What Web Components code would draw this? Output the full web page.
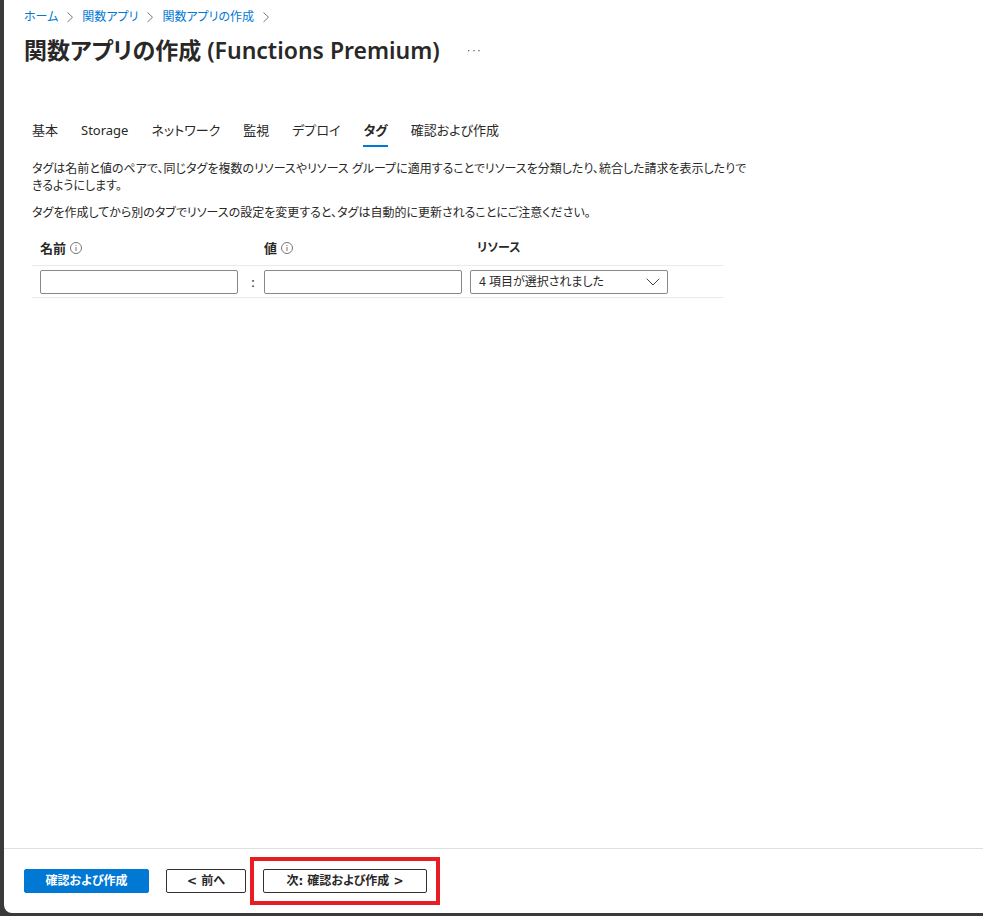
<!DOCTYPE html>
<html lang="ja">
<head>
<meta charset="utf-8">
<meta name="viewport" content="width=device-width, initial-scale=1">
<title>関数アプリの作成</title>
<style>
  :root {
    --frame: #3b3a39;
    --ink: #292827;
    --blue: #0078d4;
    --line: #edebe9;
    --control: #8a8886;
  }
  body {
    margin: 0;
    background: var(--frame);
    color: var(--ink);
    font-family: "Noto Sans", "Noto Sans CJK JP", sans-serif;
    font-size: 13px;
    font-feature-settings: "palt";
  }
</style>
</head>
<body>
<portal-blade>
  <bread-crumbs slot="top">
    <bread-crumb href="#home">ホーム</bread-crumb>
    <bread-crumb href="#apps">関数アプリ</bread-crumb>
    <bread-crumb href="#create">関数アプリの作成</bread-crumb>
  </bread-crumbs>
  <blade-title slot="top">関数アプリの作成 (Functions Premium)</blade-title>
  <tab-bar>
    <tab-item>基本</tab-item>
    <tab-item>Storage</tab-item>
    <tab-item>ネットワーク</tab-item>
    <tab-item>監視</tab-item>
    <tab-item>デプロイ</tab-item>
    <tab-item selected>タグ</tab-item>
    <tab-item>確認および作成</tab-item>
  </tab-bar>
  <info-text>
    <p>タグは名前と値のペアで、同じタグを複数のリソースやリソース グループに適用することでリソースを分類したり、統合した請求を表示したりできるようにします。</p>
    <p>タグを作成してから別のタブでリソースの設定を変更すると、タグは自動的に更新されることにご注意ください。</p>
  </info-text>
  <tag-table></tag-table>
  <action-button slot="footer" primary>確認および作成</action-button>
  <action-button slot="footer">&lt; 前へ</action-button>
  <focus-frame slot="footer"><action-button wide>次: 確認および作成 &gt;</action-button></focus-frame>
</portal-blade>

<script>
const define = (name, html, setup) => customElements.define(name, class extends HTMLElement {
  constructor() {
    super();
    const t = document.createElement('template');
    t.innerHTML = html;
    this.attachShadow({ mode: 'open' }).append(t.content.cloneNode(true));
  }
  connectedCallback() { if (setup) setup(this, this.shadowRoot); }
});

define('portal-blade', `
  <style>
    :host { display: flex; flex-direction: column; box-sizing: border-box; min-height: 100vh; padding: 0 0 3px 4px; }
    .sheet { flex: 1; display: flex; flex-direction: column; background: #fff; border-bottom-left-radius: 8px; }
    header { padding: 6px 20px 0; height: 112px; box-sizing: border-box; }
    main { flex: 1; padding: 0 28px; }
    footer { display: flex; align-items: center; padding: 20px; border-top: 1px solid #e1dfdd; gap: 17px; }
  </style>
  <div class="sheet">
    <header><slot name="top"></slot></header>
    <main><slot></slot></main>
    <footer><slot name="footer"></slot></footer>
  </div>`);

define('bread-crumbs', `
  <style>
    :host { display: block; }
    nav { display: flex; align-items: center; height: 22px; gap: 7px; }
  </style>
  <nav aria-label="階層"><slot></slot></nav>`);

define('bread-crumb', `
  <style>
    :host { display: flex; align-items: center; gap: 7px; font-size: 12px; line-height: 22px; }
    a { color: var(--blue); text-decoration: none; }
    svg { width: 10px; height: 12px; fill: none; stroke: #797775; }
  </style>
  <a><slot></slot></a>
  <svg viewBox="0 0 10 12" aria-hidden="true"><path d="M2.5 1.5 7.5 6.2 2.5 11"/></svg>`,
  (el, root) => { root.querySelector('a').href = el.getAttribute('href'); });

define('blade-title', `
  <style>
    :host { display: flex; align-items: center; gap: 28px; height: 44px; }
    h1 { margin: 0; font-size: 23px; line-height: 32px; font-weight: 600; }
    button { border: 0; padding: 0; background: none; display: flex; }
    svg { width: 12px; height: 12px; fill: #605e5c; }
  </style>
  <h1><slot></slot></h1>
  <button type="button" aria-label="その他">
    <svg viewBox="0 0 12 12"><path d="M0 6h1.3v1.3H0zM5.3 6h1.3v1.3H5.3zM10.3 6h1.3v1.3h-1.3z"/></svg>
  </button>`);

define('tab-bar', `
  <style>
    :host { display: flex; gap: 23px; height: 35px; }
  </style>
  <slot></slot>`, el => el.setAttribute('role', 'tablist'));

define('tab-item', `
  <style>
    :host { display: block; }
    button { font: inherit; font-feature-settings: inherit; color: inherit; font-size: 13px; line-height: 33px; height: 35px; padding: 2px 0 0; border: 0; border-bottom: 2px solid transparent; background: none; white-space: nowrap; display: block; }
    :host([selected]) button { font-weight: 700; border-color: var(--blue); }
  </style>
  <button type="button" role="tab"><slot></slot></button>`,
  (el, root) => root.querySelector('button').setAttribute('aria-selected', el.hasAttribute('selected')));

define('info-text', `
  <style>
    :host { display: block; max-width: 720px; padding-top: 13px; font-size: 12px; line-height: 17px; }
    ::slotted(p) { margin: 0 0 10px; }
  </style>
  <slot></slot>`);

define('info-icon', `
  <style>
    :host { display: inline-flex; }
    svg { width: 12px; height: 12px; fill: none; stroke: #797775; }
  </style>
  <svg viewBox="0 0 12 12" aria-hidden="true"><circle cx="6" cy="6" r="5.5"/><path d="M6 5v4M6 3v1"/></svg>`);

define('select-box', `
  <style>
    :host { display: grid; align-items: center; }
    select, svg { grid-area: 1 / 1; }
    select { appearance: none; box-sizing: border-box; width: 100%; height: 24px; margin: 0; padding: 0 28px 0 8px; border: 1px solid var(--control); border-radius: 2px; background: #fff; color: inherit; font: inherit; font-feature-settings: inherit; font-size: 12px; }
    svg { justify-self: end; margin-right: 8px; width: 14px; height: 8px; fill: none; stroke: #484644; pointer-events: none; }
  </style>
  <select aria-label="リソース"><option>4 項目が選択されました</option></select>
  <svg viewBox="0 0 14 8" aria-hidden="true"><path d="M.7.7 7 7 13.3.7"/></svg>`);

define('tag-table', `
  <style>
    :host { display: block; max-width: 692px; }
    table { width: 100%; table-layout: fixed; border-collapse: collapse; }
    tr { border-bottom: 1px solid var(--line); }
    th { height: 34px; padding: 0; text-align: left; font-size: 13px; line-height: 20px; font-weight: 700; white-space: nowrap; }
    th:last-of-type { font-size: 12px; padding-left: 15px; }
    th div { display: flex; align-items: center; gap: 4px; }
    td { height: 31px; padding: 0; }
    .first { padding-left: 8px; }
    .last { padding-left: 8px; padding-right: 56px; }
    .colon { text-align: center; padding-left: 4px; }
    .gap { width: 26px; }
    .a { width: 206px; }
    .b { width: 198px; }
    input { display: block; box-sizing: border-box; width: 100%; height: 24px; margin: 0; padding: 0 8px; border: 1px solid var(--control); border-radius: 2px; font: inherit; color: inherit; }
  </style>
  <table>
    <colgroup><col class="a"><col class="gap"><col class="b"><col></colgroup>
    <thead><tr>
      <th class="first"><div><span id="name">名前</span><info-icon></info-icon></div></th><td></td>
      <th><div><span id="value">値</span><info-icon></info-icon></div></th>
      <th>リソース</th>
    </tr></thead>
    <tbody><tr>
      <td class="first"><input type="text" aria-labelledby="name"></td>
      <td class="colon">:</td>
      <td><input type="text" aria-labelledby="value"></td>
      <td class="last"><select-box></select-box></td>
    </tr></tbody>
  </table>`);

define('action-button', `
  <style>
    :host { display: block; font-family: "DejaVu Sans", "Noto Sans CJK JP", sans-serif; }
    button { box-sizing: border-box; height: 24px; padding: 0 20px; border: 1px solid #323130; border-radius: 2px; background: #fff; color: inherit; font: inherit; font-feature-settings: inherit; font-size: 12px; line-height: 20px; font-weight: 600; white-space: nowrap; display: block; min-width: 80px; }
    :host([primary]) button { background: var(--blue); border-color: var(--blue); color: #fff; min-width: 125px; }
    :host([wide]) button { min-width: 164px; }
  </style>
  <button type="button"><slot></slot></button>`);

define('focus-frame', `
  <style>
    :host { display: block; position: relative; }
    :host::after { content: ""; position: absolute; inset: -12px -13px; border: 4px solid #e81c23; pointer-events: none; }
  </style>
  <slot></slot>`);
</script>
</body>
</html>
